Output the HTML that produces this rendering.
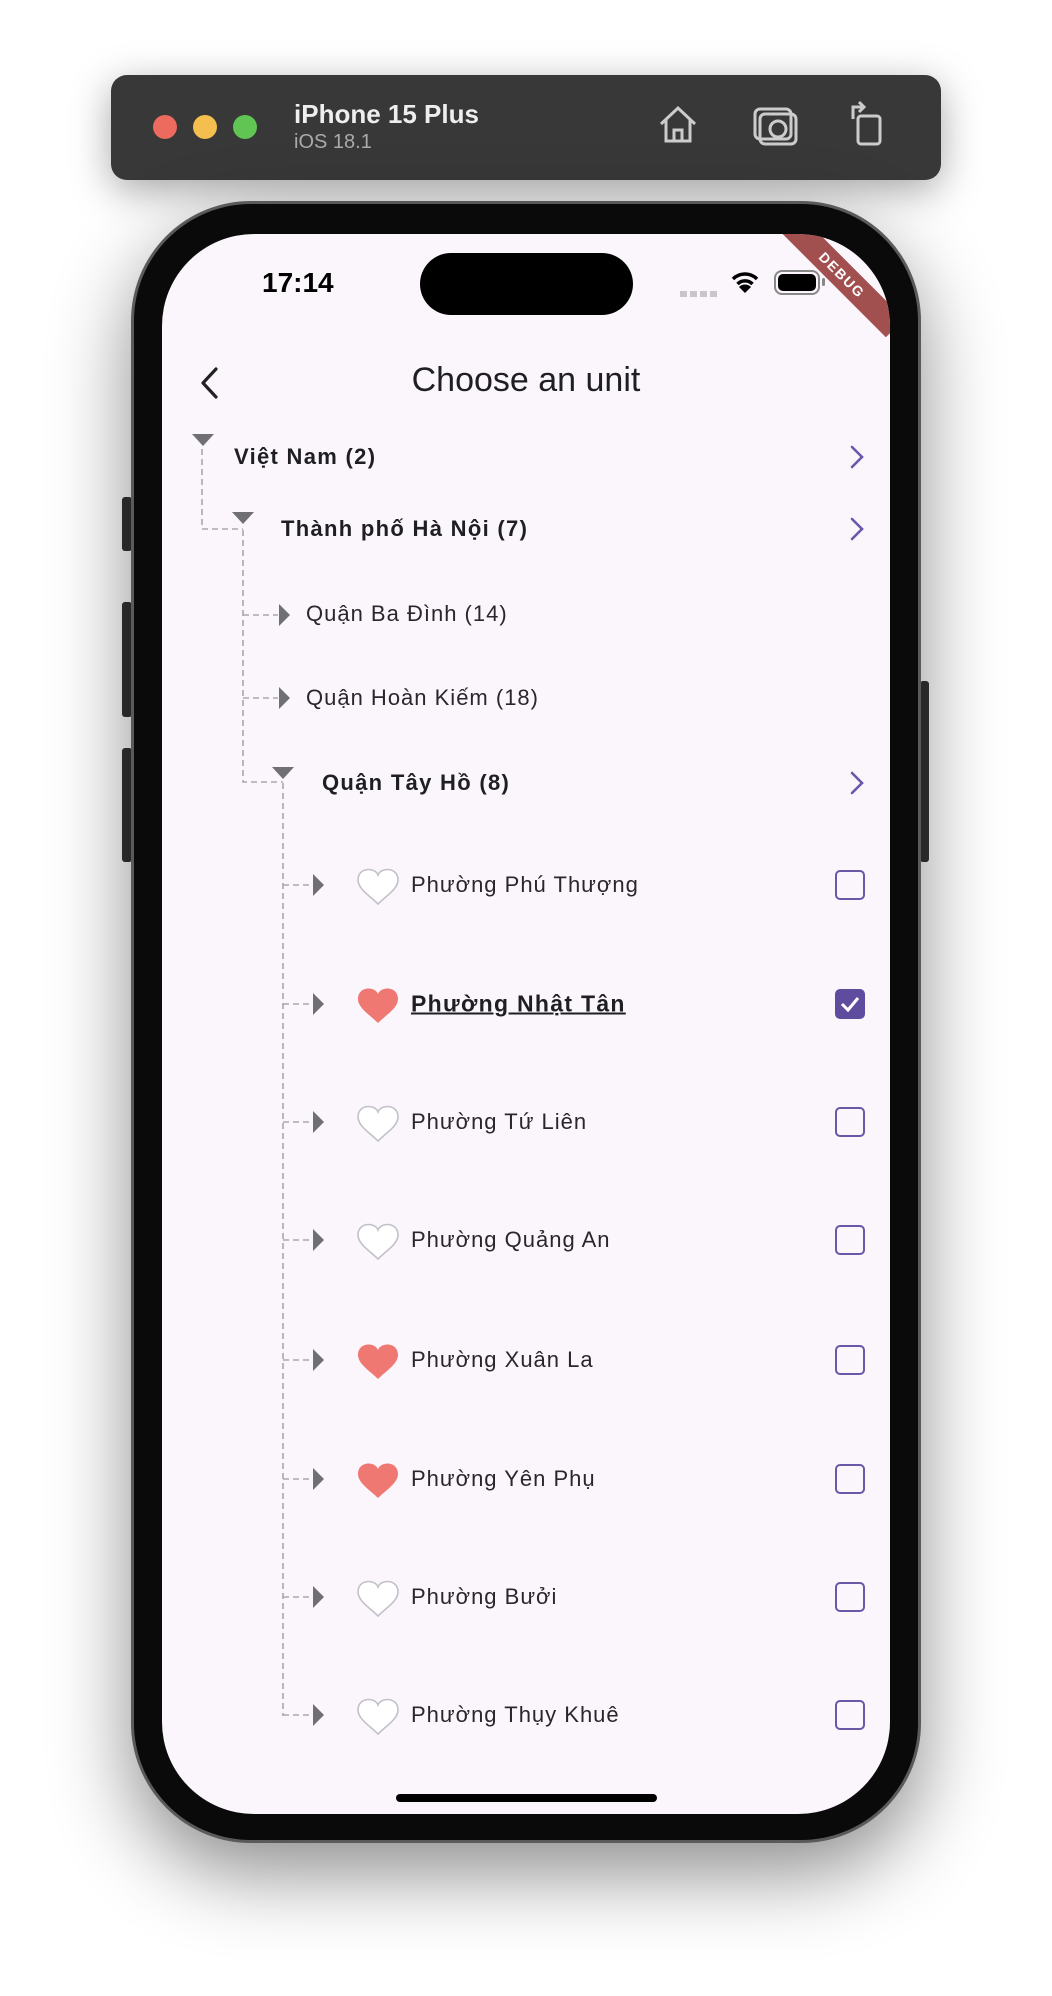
<!DOCTYPE html>
<html><head><meta charset="utf-8"><style>
*{margin:0;padding:0;box-sizing:border-box}
body{width:1052px;height:1996px;background:#fff;position:relative;overflow:hidden;font-family:"Liberation Sans",sans-serif}
.abs{position:absolute}
.tb{left:111px;top:75px;width:830px;height:105px;background:#383838;border-radius:16px;box-shadow:0 10px 40px rgba(0,0,0,.35)}
.dot{width:24px;height:24px;border-radius:50%;top:40px}
.phone{left:131px;top:201px;width:790px;height:1642px;background:#0a0a0a;border-radius:120px;border:3px solid #5a5a5a;box-shadow:0 30px 80px rgba(0,0,0,.45)}
.screen{left:162px;top:234px;width:728px;height:1580px;background:#fbf6fc;border-radius:92px;overflow:hidden}
.t{position:absolute;color:#1f1f22;white-space:nowrap;transform:translateY(-50%);letter-spacing:1px}
.b{font-weight:bold;font-size:22px;letter-spacing:1.3px}
.r{font-size:22px;color:#29272b}
.cb{position:absolute;left:673px;width:30px;height:30px;border:2px solid #6a57a8;border-radius:5px;transform:translateY(-50%)}
</style></head><body>
<div class="abs tb">
 <div class="abs dot" style="left:42px;background:#ec6a5e"></div>
 <div class="abs dot" style="left:82px;background:#f4bf4f"></div>
 <div class="abs dot" style="left:122px;background:#61c554"></div>
 <div class="abs" style="left:183px;top:24px;color:#eee;font-weight:bold;font-size:26px">iPhone 15 Plus</div>
 <div class="abs" style="left:183px;top:56px;color:#aaa;font-size:20px">iOS 18.1</div>
 <svg class="abs" style="left:545px;top:28px" width="44" height="44" viewBox="0 0 44 44" fill="none" stroke="#ccc" stroke-width="3"><path d="M5 21 L22 5 L39 21 M10 17 V38 H34 V17 M18 38 V27 H26 V38"/></svg>
 <svg class="abs" style="left:640px;top:28px" width="48" height="44" viewBox="0 0 48 44" fill="none" stroke="#ccc" stroke-width="3"><rect x="4" y="6" width="36" height="30" rx="5"/><rect x="9" y="11" width="36" height="30" rx="5"/><circle cx="27" cy="26" r="8"/></svg>
 <svg class="abs" style="left:736px;top:24px" width="40" height="48" viewBox="0 0 40 48" fill="none" stroke="#ccc" stroke-width="3"><rect x="11" y="17" width="22" height="28" rx="3"/><path d="M6 20 V8 H16 M12 3 L17 8 L12 13"/></svg>
</div>
<div class="abs" style="left:122px;top:497px;width:10px;height:54px;background:#333;border-radius:3px"></div>
<div class="abs" style="left:122px;top:602px;width:10px;height:115px;background:#333;border-radius:3px"></div>
<div class="abs" style="left:122px;top:748px;width:10px;height:114px;background:#333;border-radius:3px"></div>
<div class="abs" style="left:920px;top:681px;width:9px;height:181px;background:#333;border-radius:3px"></div>
<div class="abs phone"></div>
<div class="abs screen">
 <div class="abs" style="left:258px;top:19px;width:213px;height:62px;background:#000;border-radius:31px"></div>
 <div class="abs" style="left:100px;top:33px;font-size:28px;font-weight:bold;color:#000">17:14</div>
 <div class="abs" style="left:518px;top:57px;width:38px;height:6px;background:repeating-linear-gradient(90deg,#c8c6cc 0 7px,transparent 7px 10px)"></div>
 <svg class="abs" style="left:568px;top:36px" width="30" height="24" viewBox="0 0 30 24"><path d="M15 23 L9 17 A8.5 8.5 0 0 1 21 17 Z" fill="#000"/><path d="M3 9 A17 17 0 0 1 27 9" stroke="#000" stroke-width="3.5" fill="none"/><path d="M7.5 14 A10.5 10.5 0 0 1 22.5 14" stroke="#000" stroke-width="3.5" fill="none"/></svg>
 <div class="abs" style="left:612px;top:36px;width:46px;height:25px;border:2px solid #888;border-radius:8px;padding:2px"><div style="width:100%;height:100%;background:#000;border-radius:5px"></div></div>
 <div class="abs" style="left:660px;top:44px;width:3px;height:8px;background:#888;border-radius:2px"></div>
 <div class="abs" style="left:605px;top:28px;width:150px;height:26px;background:#a24f4f;color:#fff;font-weight:bold;font-size:14px;letter-spacing:1.5px;text-align:center;line-height:26px;transform:rotate(45deg);transform-origin:center">DEBUG</div>

 <svg class="abs" style="left:36px;top:132px" width="24" height="34" viewBox="0 0 24 34"><path d="M18 3 L5 17 L18 31" stroke="#222" stroke-width="3.2" fill="none" stroke-linecap="round" stroke-linejoin="round"/></svg>
 <div class="abs" style="left:0;width:728px;top:127px;text-align:center;font-size:34px;color:#1f1f22">Choose an unit</div>

 <svg class="abs" style="left:0;top:0" width="728" height="1580">
  <g stroke="#a9a7ad" stroke-width="1.6" stroke-dasharray="6 4" fill="none">
   <path d="M40 215 V295 H81"/>
   <path d="M81 296 V548 H121"/>
   <path d="M81 381 H116 M81 464 H116"/>
   <path d="M121 549 V1482"/>
   <path d="M121 651 H150 M121 770 H150 M121 888 H150 M121 1006 H150 M121 1126 H150 M121 1245 H150 M121 1363 H150 M121 1481 H150"/>
  </g>
  <g fill="#707074">
   <path d="M30 200 H52 L41 212 Z"/>
   <path d="M70 278 H92 L81 290 Z"/>
   <path d="M110 533 H132 L121 545 Z"/>
   <path d="M117 370 V392 L128 381 Z"/>
   <path d="M117 453 V475 L128 464 Z"/>
   <path d="M151 640 V662 L162 651 Z"/><path d="M151 759 V781 L162 770 Z"/><path d="M151 877 V899 L162 888 Z"/><path d="M151 995 V1017 L162 1006 Z"/><path d="M151 1115 V1137 L162 1126 Z"/><path d="M151 1234 V1256 L162 1245 Z"/><path d="M151 1352 V1374 L162 1363 Z"/><path d="M151 1470 V1492 L162 1481 Z"/>
  </g>
  <g stroke="#6a57a8" stroke-width="2.6" fill="none" stroke-linecap="round">
   <path d="M690 213 L700 223 L690 233"/>
   <path d="M690 285 L700 295 L690 305"/>
   <path d="M690 539 L700 549 L690 559"/>
  </g>
  <defs><path id="h" d="M0 -8 C-3 -16 -20 -16 -20 -3 C-20 6 -8 13 0 21 C8 13 20 6 20 -3 C20 -16 3 -16 0 -8 Z"/></defs>
  <use href="#h" x="216" y="649" fill="#fff" stroke="#c2c0c8" stroke-width="1.6"/>
  <use href="#h" x="216" y="768" fill="#ef7873"/>
  <use href="#h" x="216" y="886" fill="#fff" stroke="#c2c0c8" stroke-width="1.6"/>
  <use href="#h" x="216" y="1004" fill="#fff" stroke="#c2c0c8" stroke-width="1.6"/>
  <use href="#h" x="216" y="1124" fill="#ef7873"/>
  <use href="#h" x="216" y="1243" fill="#ef7873"/>
  <use href="#h" x="216" y="1361" fill="#fff" stroke="#c2c0c8" stroke-width="1.6"/>
  <use href="#h" x="216" y="1479" fill="#fff" stroke="#c2c0c8" stroke-width="1.6"/>
 </svg>

 <div class="t b" style="left:72px;top:223px">Việt Nam (2)</div>
 <div class="t b" style="left:119px;top:295px">Thành phố Hà Nội (7)</div>
 <div class="t r" style="left:144px;top:380px">Quận Ba Đình (14)</div>
 <div class="t r" style="left:144px;top:464px">Quận Hoàn Kiếm (18)</div>
 <div class="t b" style="left:160px;top:549px">Quận Tây Hồ (8)</div>
 <div class="t r" style="left:249px;top:651px">Phường Phú Thượng</div>
 <div class="t b" style="left:249px;top:770px;font-size:23px;text-decoration:underline;text-decoration-thickness:2px">Phường Nhật Tân</div>
 <div class="t r" style="left:249px;top:888px">Phường Tứ Liên</div>
 <div class="t r" style="left:249px;top:1006px">Phường Quảng An</div>
 <div class="t r" style="left:249px;top:1126px">Phường Xuân La</div>
 <div class="t r" style="left:249px;top:1245px">Phường Yên Phụ</div>
 <div class="t r" style="left:249px;top:1363px">Phường Bưởi</div>
 <div class="t r" style="left:249px;top:1481px">Phường Thụy Khuê</div>

 <div class="cb" style="top:651px"></div>
 <div class="cb" style="top:770px;background:#5f4c9e;border-color:#5f4c9e"><svg width="26" height="26" viewBox="0 0 26 26" style="position:absolute;left:0;top:0"><path d="M5 13 L11 19 L21 7" stroke="#fff" stroke-width="3" fill="none"/></svg></div>
 <div class="cb" style="top:888px"></div>
 <div class="cb" style="top:1006px"></div>
 <div class="cb" style="top:1126px"></div>
 <div class="cb" style="top:1245px"></div>
 <div class="cb" style="top:1363px"></div>
 <div class="cb" style="top:1481px"></div>

 <div class="abs" style="left:234px;top:1560px;width:261px;height:8px;background:#000;border-radius:4px"></div>
</div>
</body></html>
